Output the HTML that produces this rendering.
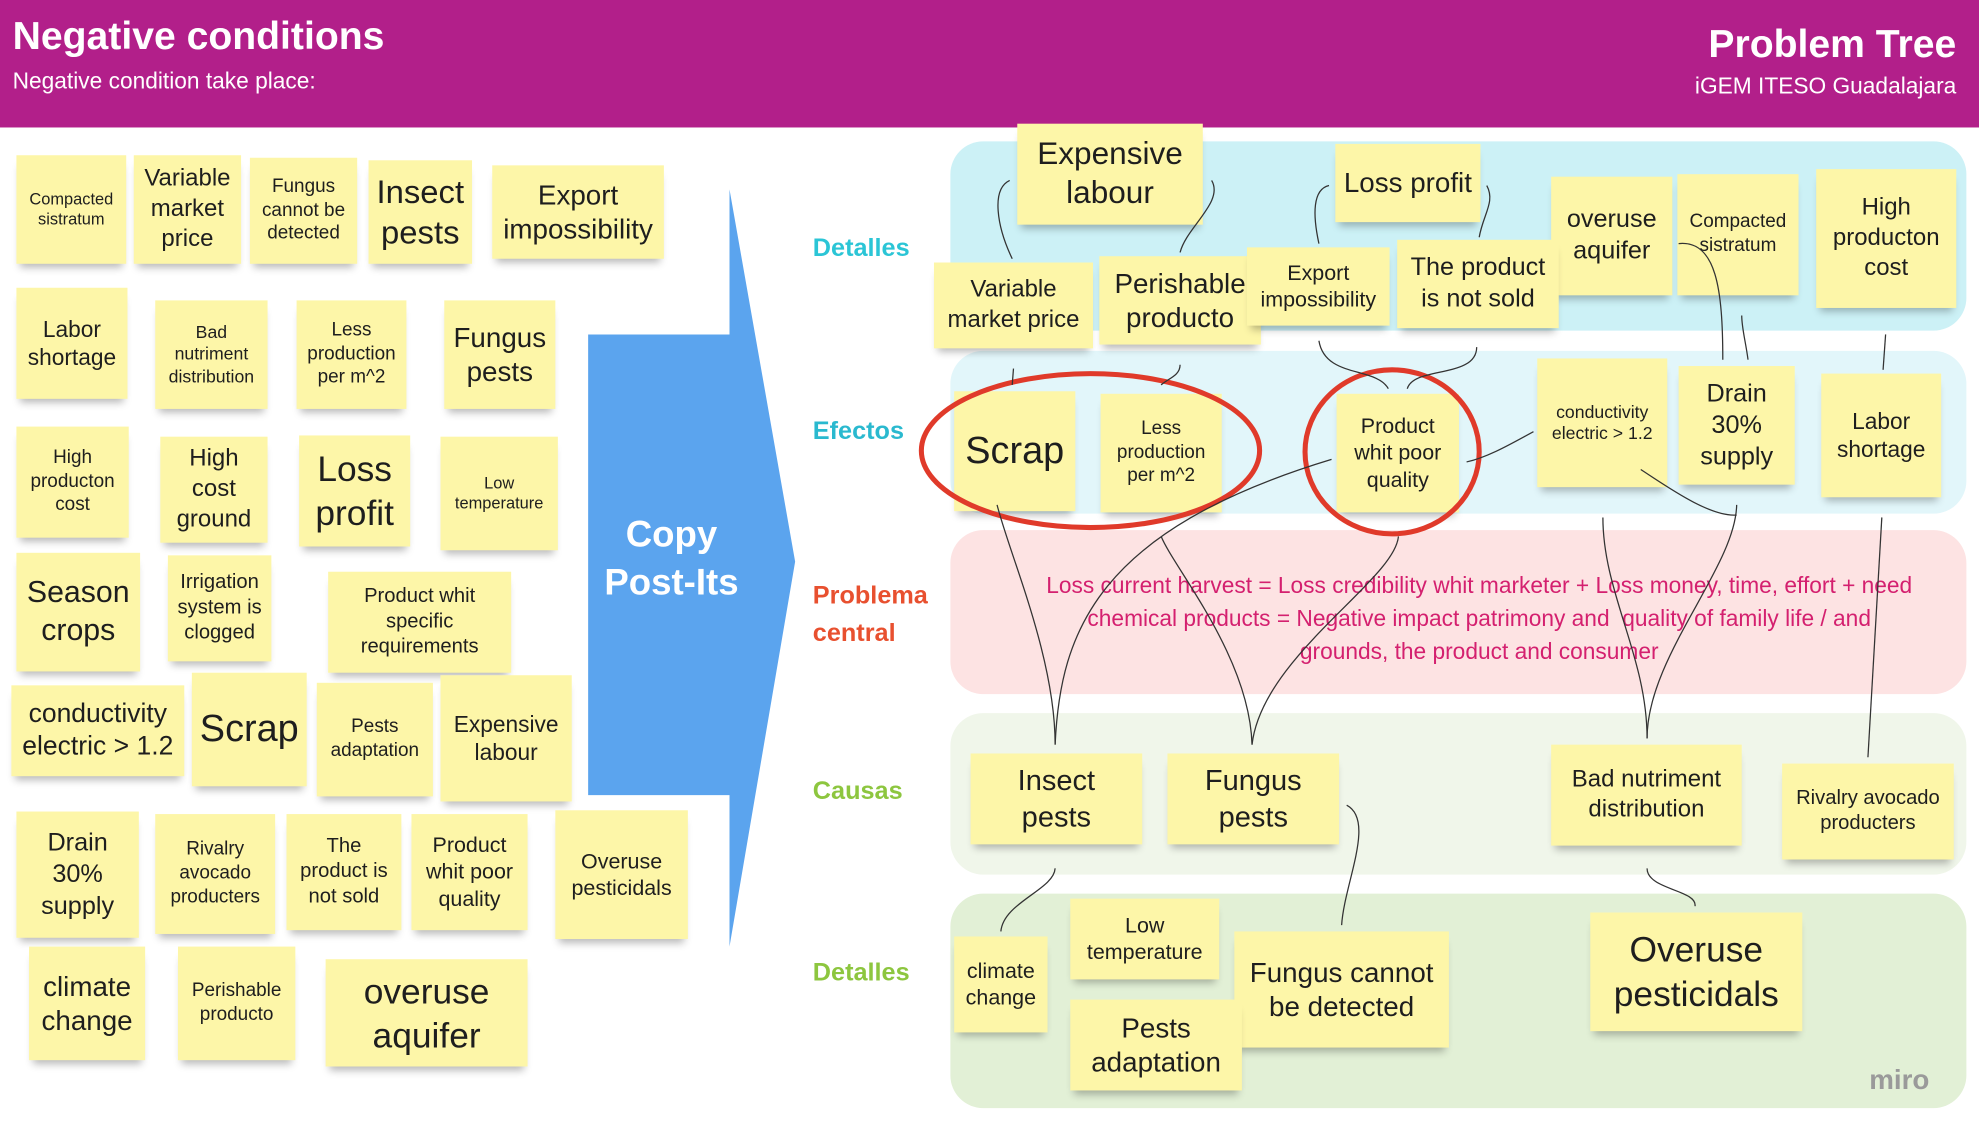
<!DOCTYPE html>
<html><head><meta charset="utf-8">
<style>
html,body{margin:0;padding:0;background:#fff;}
body{width:1979px;height:1136px;overflow:hidden;position:relative;}
#w{position:absolute;left:0;top:0;width:1568px;height:900px;transform:scale(1.26212);transform-origin:0 0;font-family:"Liberation Sans",sans-serif;}
.hd{position:absolute;left:0;top:0;width:1568px;height:101px;background:#b21f8a;color:#fff;}
.s{position:absolute;background:#fdf6a8;display:flex;align-items:center;justify-content:center;text-align:center;color:#1e1e1e;line-height:1.25;box-shadow:0 6px 6px -3px rgba(0,0,0,0.28);box-sizing:border-box;padding:2px;}
.band{position:absolute;left:753px;width:805px;border-radius:26px;}
.lb{position:absolute;font-weight:bold;font-size:20px;}
</style></head><body><div id="w">
<div class="hd">
<div style="position:absolute;left:10px;top:11px;font-size:31px;font-weight:bold;">Negative conditions</div>
<div style="position:absolute;left:10px;top:54px;font-size:18px;">Negative condition take place:</div>
<div style="position:absolute;right:18px;top:17px;font-size:31px;font-weight:bold;">Problem Tree</div>
<div style="position:absolute;right:18px;top:58px;font-size:18px;">iGEM ITESO Guadalajara</div>
</div>

<svg style="position:absolute;left:0;top:0" width="1568" height="900">
<polygon points="466,265 578,265 578,150 630,445 578,750 578,630 466,630" fill="#5ba4ee"/>
</svg>
<div style="position:absolute;left:466px;top:405px;width:132px;text-align:center;color:#fff;font-weight:bold;font-size:29px;line-height:38px;">Copy<br>Post-Its</div>

<div class="s" style="left:13px;top:123px;width:87px;height:86px;font-size:13px;">Compacted<br>sistratum</div>
<div class="s" style="left:106px;top:123px;width:85px;height:86px;font-size:19px;">Variable<br>market<br>price</div>
<div class="s" style="left:198px;top:125px;width:85px;height:84px;font-size:15px;">Fungus<br>cannot be<br>detected</div>
<div class="s" style="left:292px;top:127px;width:82px;height:82px;font-size:26px;">Insect<br>pests</div>
<div class="s" style="left:390px;top:131px;width:136px;height:74px;font-size:22px;">Export<br>impossibility</div>
<div class="s" style="left:13px;top:228px;width:88px;height:88px;font-size:18px;">Labor<br>shortage</div>
<div class="s" style="left:123px;top:238px;width:89px;height:86px;font-size:14px;">Bad<br>nutriment<br>distribution</div>
<div class="s" style="left:235px;top:238px;width:87px;height:86px;font-size:15px;">Less<br>production<br>per m^2</div>
<div class="s" style="left:352px;top:238px;width:88px;height:86px;font-size:22px;">Fungus<br>pests</div>
<div class="s" style="left:13px;top:338px;width:89px;height:88px;font-size:15px;">High<br>producton<br>cost</div>
<div class="s" style="left:127px;top:346px;width:85px;height:84px;font-size:19px;">High<br>cost<br>ground</div>
<div class="s" style="left:237px;top:345px;width:88px;height:88px;font-size:28px;">Loss<br>profit</div>
<div class="s" style="left:349px;top:346px;width:93px;height:90px;font-size:13px;">Low<br>temperature</div>
<div class="s" style="left:13px;top:438px;width:98px;height:94px;font-size:24px;">Season<br>crops</div>
<div class="s" style="left:133px;top:440px;width:82px;height:84px;font-size:16px;">Irrigation<br>system is<br>clogged</div>
<div class="s" style="left:260px;top:453px;width:145px;height:80px;font-size:16px;">Product whit<br>specific<br>requirements</div>
<div class="s" style="left:9px;top:543px;width:137px;height:72px;font-size:21px;">conductivity<br>electric &gt; 1.2</div>
<div class="s" style="left:152px;top:533px;width:91px;height:90px;font-size:30px;">Scrap</div>
<div class="s" style="left:251px;top:541px;width:92px;height:90px;font-size:15px;">Pests<br>adaptation</div>
<div class="s" style="left:349px;top:535px;width:104px;height:100px;font-size:18px;">Expensive<br>labour</div>
<div class="s" style="left:13px;top:643px;width:97px;height:100px;font-size:20px;">Drain<br>30%<br>supply</div>
<div class="s" style="left:123px;top:645px;width:95px;height:95px;font-size:15px;">Rivalry<br>avocado<br>producters</div>
<div class="s" style="left:227px;top:645px;width:91px;height:92px;font-size:16px;">The<br>product is<br>not sold</div>
<div class="s" style="left:326px;top:645px;width:92px;height:92px;font-size:17px;">Product<br>whit poor<br>quality</div>
<div class="s" style="left:440px;top:642px;width:105px;height:102px;font-size:17px;">Overuse<br>pesticidals</div>
<div class="s" style="left:23px;top:750px;width:92px;height:90px;font-size:22px;">climate<br>change</div>
<div class="s" style="left:141px;top:750px;width:93px;height:90px;font-size:15px;">Perishable<br>producto</div>
<div class="s" style="left:258px;top:760px;width:160px;height:85px;font-size:28px;">overuse<br>aquifer</div>

<div class="band" style="top:112px;height:150px;background:#ccf1f6;"></div>
<div class="band" style="top:278px;height:129px;background:#e2f6fa;"></div>
<div class="band" style="top:420px;height:130px;background:#fde3e3;"></div>
<div class="band" style="top:565px;height:128px;background:#f0f6ea;"></div>
<div class="band" style="top:708px;height:170px;background:#e2f0d6;"></div>

<div class="lb" style="left:644px;top:186px;color:#2bc5d6;">Detalles</div>
<div class="lb" style="left:644px;top:331px;color:#2ab9cf;">Efectos</div>
<div class="lb" style="left:644px;top:457px;color:#e8502f;line-height:30px;">Problema<br>central</div>
<div class="lb" style="left:644px;top:616px;color:#8dc63f;">Causas</div>
<div class="lb" style="left:644px;top:760px;color:#8dc63f;">Detalles</div>

<div style="position:absolute;left:772px;top:451px;width:800px;text-align:center;color:#d4206f;font-size:18px;line-height:26px;white-space:nowrap;">Loss current harvest = Loss credibility whit marketer + Loss money, time, effort + need<br>chemical products = Negative impact patrimony and &nbsp;quality of family life / and<br>grounds, the product and consumer</div>

<div class="s" style="left:806px;top:98px;width:147px;height:80px;font-size:25px;">Expensive<br>labour</div>
<div class="s" style="left:1058px;top:114px;width:115px;height:62px;font-size:22px;">Loss profit</div>
<div class="s" style="left:1229px;top:140px;width:96px;height:94px;font-size:20px;">overuse<br>aquifer</div>
<div class="s" style="left:1329px;top:138px;width:96px;height:96px;font-size:15px;">Compacted<br>sistratum</div>
<div class="s" style="left:1439px;top:134px;width:111px;height:110px;font-size:19px;">High<br>producton<br>cost</div>
<div class="s" style="left:740px;top:208px;width:126px;height:68px;font-size:19px;">Variable<br>market price</div>
<div class="s" style="left:871px;top:203px;width:128px;height:70px;font-size:22px;">Perishable<br>producto</div>
<div class="s" style="left:988px;top:196px;width:113px;height:62px;font-size:17px;">Export<br>impossibility</div>
<div class="s" style="left:1107px;top:190px;width:128px;height:70px;font-size:20px;">The product<br>is not sold</div>
<div class="s" style="left:756px;top:310px;width:96px;height:95px;font-size:30px;">Scrap</div>
<div class="s" style="left:872px;top:312px;width:96px;height:94px;font-size:15px;">Less<br>production<br>per m^2</div>
<div class="s" style="left:1059px;top:312px;width:97px;height:94px;font-size:17px;">Product<br>whit poor<br>quality</div>
<div class="s" style="left:1218px;top:284px;width:103px;height:102px;font-size:14px;">conductivity<br>electric &gt; 1.2</div>
<div class="s" style="left:1330px;top:290px;width:92px;height:94px;font-size:20px;">Drain<br>30%<br>supply</div>
<div class="s" style="left:1443px;top:296px;width:95px;height:98px;font-size:18px;">Labor<br>shortage</div>
<div class="s" style="left:769px;top:597px;width:136px;height:72px;font-size:23px;">Insect<br>pests</div>
<div class="s" style="left:925px;top:597px;width:136px;height:72px;font-size:23px;">Fungus<br>pests</div>
<div class="s" style="left:1229px;top:590px;width:151px;height:80px;font-size:19px;">Bad nutriment<br>distribution</div>
<div class="s" style="left:1412px;top:605px;width:136px;height:76px;font-size:16px;">Rivalry avocado<br>producters</div>
<div class="s" style="left:756px;top:742px;width:74px;height:76px;font-size:17px;">climate<br>change</div>
<div class="s" style="left:848px;top:712px;width:118px;height:64px;font-size:17px;">Low<br>temperature</div>
<div class="s" style="left:978px;top:738px;width:170px;height:92px;font-size:22px;">Fungus cannot<br>be detected</div>
<div class="s" style="left:848px;top:792px;width:136px;height:72px;font-size:22px;">Pests<br>adaptation</div>
<div class="s" style="left:1260px;top:723px;width:168px;height:94px;font-size:28px;">Overuse<br>pesticidals</div>

<svg style="position:absolute;left:0;top:0" width="1568" height="900" fill="none" stroke="#333" stroke-width="1">
<ellipse cx="864" cy="357" rx="134" ry="61" stroke="#e03a2a" stroke-width="4"/>
<ellipse cx="1103" cy="358" rx="69" ry="65" stroke="#e03a2a" stroke-width="4"/>
<path d="M802 205 C790 180 785 150 800 143"/>
<path d="M935 200 C940 180 970 160 960 143"/>
<path d="M1045 193 C1040 170 1040 150 1053 147"/>
<path d="M1172 188 C1175 170 1185 160 1178 147"/>
<path d="M1365 285 C1365 230 1360 190 1330 193"/>
<path d="M1385 285 C1383 270 1380 260 1380 250"/>
<path d="M1492 293 L1494 265"/>
<path d="M802 305 L803 292"/>
<path d="M920 305 C925 300 935 298 935 289"/>
<path d="M1100 308 C1090 290 1050 300 1045 270"/>
<path d="M1115 308 C1120 290 1170 300 1170 275"/>
<path d="M1215 342 C1200 350 1180 362 1162 366"/>
<path d="M836 590 C836 520 800 440 790 400"/>
<path d="M836 590 C840 500 870 420 1055 364"/>
<path d="M992 590 C990 520 930 450 920 425"/>
<path d="M992 590 C1000 520 1105 460 1108 425"/>
<path d="M1305 585 C1305 520 1270 470 1270 410"/>
<path d="M1305 585 C1305 520 1375 450 1376 400"/>
<path d="M1376 408 C1355 410 1320 385 1300 372"/>
<path d="M1480 600 L1491 410"/>
<path d="M793 738 C795 715 835 705 836 688"/>
<path d="M1063 733 C1065 700 1090 650 1067 638"/>
<path d="M1343 718 C1345 705 1305 705 1305 688"/>
</svg>
<div style="position:absolute;left:1481px;top:843px;font-size:22px;color:#9a9a9a;font-weight:bold;">miro</div>
</div></body></html>
